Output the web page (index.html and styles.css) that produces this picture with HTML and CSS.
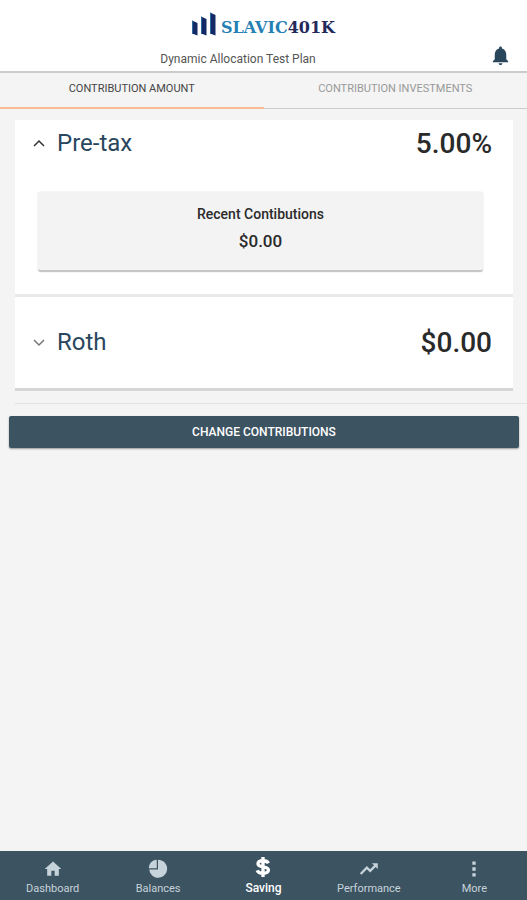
FILE: index.html
```html
<!DOCTYPE html>
<html lang="en">
<head>
<meta charset="utf-8">
<meta name="viewport" content="width=device-width, initial-scale=1">
<title>Slavic401k - Saving</title>
<link rel="stylesheet" href="styles.css">
</head>
<body>
<header class="header">
  <div class="brand">
    <svg class="brand-mark" viewBox="0 0 24 24" aria-hidden="true">
      <path fill="#142a66" d="M0 8.5l5.500 2.500v12.500l-5.500-2zM9 4.500l5.500 2.500v16.500l-5.500-2zM18 .5l5.500 2.500v20.500l-5.500-2z"/>
      <path fill="#2c6ba0" d="M0 8.500l1 .5v12.800l-1-.3zM9 4.500l1 .5v16.800l-1-.3zM18 .5l1 .5v20.800l-1-.3z"/>
    </svg>
    <span class="brand-name">SLAVIC<span class="brand-number">401K</span></span>
  </div>
  <p class="plan">Dynamic Allocation Test Plan</p>
  <button class="bell" type="button" aria-label="Notifications">
    <svg viewBox="0 0 24 24"><path d="M12 22c1.100 0 2-.9 2-2h-4c0 1.100.9 2 2 2zm6-6v-5c0-3.070-1.640-5.640-4.500-6.320V4c0-.83-.67-1.500-1.500-1.500s-1.500.67-1.500 1.500v.68C7.630 5.360 6 7.920 6 11v5l-2 2v1h16v-1z"/></svg>
  </button>
</header>
<nav class="tabs">
  <a class="tab tab-active" href="#amount">CONTRIBUTION AMOUNT</a>
  <a class="tab" href="#investments">CONTRIBUTION INVESTMENTS</a>
</nav>
<main class="main">
  <div class="card">
    <section class="source">
      <button class="source-head" type="button" aria-expanded="true">
        <svg class="chevron" viewBox="0 0 12 12"><path d="M1 9l5-5 5 5"/></svg>
        <span class="source-name">Pre-tax</span>
        <span class="source-value">5.00%</span>
      </button>
      <div class="recent">
        <h2 class="recent-title">Recent Contibutions</h2>
        <p class="recent-value">$0.00</p>
      </div>
    </section>
    <section class="source source-closed">
      <button class="source-head" type="button" aria-expanded="false">
        <svg class="chevron chevron-down" viewBox="0 0 12 12"><path d="M1 4l5 5 5-5"/></svg>
        <span class="source-name">Roth</span>
        <span class="source-value">$0.00</span>
      </button>
    </section>
  </div>
  <hr class="rule">
  <button class="change" type="button">CHANGE CONTRIBUTIONS</button>
</main>
<nav class="bottom">
  <a class="item" href="#dashboard">
    <svg class="item-icon" viewBox="0 0 24 24"><path d="M10 20v-6h4v6h5v-8h3L12 3 2 12h3v8z"/></svg>
    <span>Dashboard</span>
  </a>
  <a class="item" href="#balances">
    <svg class="item-icon" viewBox="0 0 24 24"><path d="M10.500 1v10H1C1 5.500 5 1.500 10.500 1z"/><path d="M12 1c6 0 11 4.800 11 10.700S18 22.500 12.300 22.500C6.800 22.500 2.300 18.500 1.500 12.500H12z"/></svg>
    <span>Balances</span>
  </a>
  <a class="item item-active" href="#saving" aria-current="page">
    <svg class="item-icon" viewBox="0 0 24 24"><path class="dollar" d="M18.500 7.500C17.500 5.500 15.500 4.500 12 4.500c-4 0-6 1.500-6 3.700 0 5.300 12.500 2 12.500 7.500 0 2.500-2.500 3.800-6.500 3.800-3.700 0-6-1.200-7-3.500M12 0v24"/></svg>
    <span>Saving</span>
  </a>
  <a class="item" href="#performance">
    <svg class="item-icon" viewBox="0 0 24 24"><path d="M15.500 5l2.500 2.500-4.600 4.900-4-4L1 17l2 2 6.400-6.800 4 4 6.600-6.700 2.500 2.500V5z"/></svg>
    <span>Performance</span>
  </a>
  <a class="item" href="#more">
    <svg class="item-icon" viewBox="0 0 24 24"><path d="M10 3h4v4h-4zM10 10h4v4h-4zM10 17h4v4h-4z"/></svg>
    <span>More</span>
  </a>
</nav>
</body>
</html>
```
FILE: styles.css
```css
* {
  box-sizing: border-box;
}

body {
  margin: 0;
  min-height: 100vh;
  display: flex;
  flex-direction: column;
  background: #f4f4f4;
  color: #2a2a2a;
  font-family: Roboto, "Liberation Sans", sans-serif;
}

button {
  border: 0;
  padding: 0;
  background: none;
  color: inherit;
  font: inherit;
  cursor: pointer;
}

a {
  color: inherit;
  text-decoration: none;
}

h2,
p {
  margin: 0;
}

.header {
  position: relative;
  display: flex;
  flex-direction: column;
  align-items: center;
  gap: 14px;
  padding: 12px 0 3px;
  border-bottom: 2px solid #cbcbcb;
  background: #fff;
}

.brand {
  display: flex;
  align-items: flex-end;
  gap: 5px;
}

.brand-mark {
  width: 24px;
  height: 24px;
}

.brand-name {
  color: #2580b4;
  font: bold 16px/16px "DejaVu Serif", serif;
}

.brand-number {
  color: #24295c;
}

.plan {
  padding-right: 51px;
  color: #555;
  font-size: 12px;
  line-height: 18px;
}

.bell {
  position: absolute;
  right: 15px;
  bottom: 4px;
  width: 23px;
  height: 23px;
}

.bell svg {
  display: block;
  fill: #29465a;
}

.tabs {
  display: flex;
}

.tab {
  flex: 1;
  padding: 7px 0 10px;
  border-bottom: 1px solid #ccc;
  color: #999;
  font-size: 11px;
  line-height: 18px;
  text-align: center;
}

.tab-active {
  padding-bottom: 9px;
  border-bottom: 2px solid #fbb991;
  color: #444;
}

.main {
  flex: 1;
  padding-top: 11px;
}

.card {
  margin: 0 14px 0 15px;
  border-bottom: 3px solid #d6d6d6;
  background: #fff;
}

.source {
  padding-bottom: 22px;
  border-bottom: 3px solid #e9e9e9;
}

.source-closed {
  padding: 22px 0 23px;
  border-bottom: 0;
}

.source-head {
  display: flex;
  align-items: center;
  width: 100%;
  height: 46px;
  padding: 0 21px 0 18px;
}

.chevron {
  width: 12px;
  height: 12px;
  fill: none;
  stroke: #333;
  stroke-width: 1.5;
}

.chevron-down {
  stroke: #777;
}

.source-name {
  margin-left: 12px;
  color: #29465e;
  font-size: 24px;
}

.source-value {
  margin-left: auto;
  font-size: 28px;
  font-weight: 500;
}

.recent {
  margin: 26px 30px 0 23px;
  padding: 12px 0 18px;
  border-bottom: 2px solid #c6c6c6;
  border-radius: 3px;
  background: #f3f3f3;
  box-shadow: 0 0 2px #ddd;
  text-align: center;
}

.recent-title {
  font-size: 14px;
  font-weight: 500;
  line-height: 20px;
}

.recent-value {
  margin-top: 6px;
  font-size: 17px;
  font-weight: 500;
  line-height: 22px;
}

.rule {
  height: 1px;
  margin: 12px 0 12px 15px;
  border: 0;
  background: #e2e2e2;
}

.change {
  display: block;
  width: calc(100% - 17px);
  height: 32px;
  margin: 0 8px 0 9px;
  border-radius: 2px;
  background: #3c5362;
  box-shadow: 0 1px 2px #999;
  color: #fff;
  font-size: 12px;
  font-weight: 500;
}

.bottom {
  display: grid;
  grid-template-columns: repeat(5, 1fr);
  height: 49px;
  background: #3c5362;
}

.item {
  display: flex;
  flex-direction: column;
  align-items: center;
  gap: 3px;
  padding-top: 8px;
  color: #c7d3da;
  font-size: 11px;
  line-height: 14px;
}

.item-icon {
  width: 20px;
  height: 20px;
  fill: currentColor;
}

.item-active {
  gap: 4px;
  padding-top: 6px;
  color: #fff;
  font-size: 12px;
  font-weight: 500;
}

.dollar {
  fill: none;
  stroke: currentColor;
  stroke-width: 4;
}
```
